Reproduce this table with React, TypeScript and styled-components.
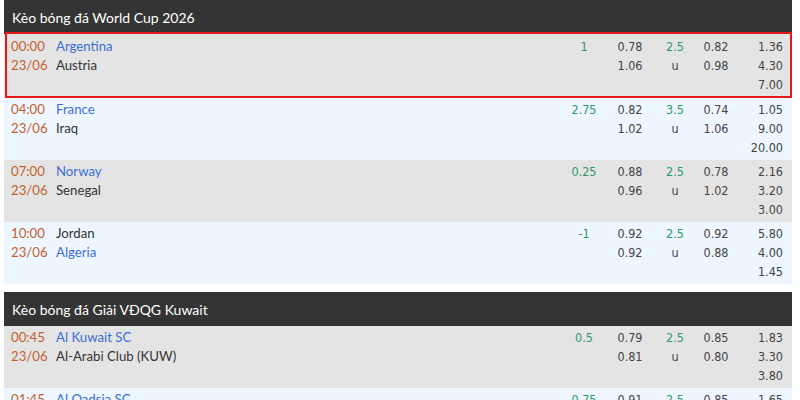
import React from "react";
import styled, { createGlobalStyle, css } from "styled-components";

const GlobalStyle = createGlobalStyle`
  html, body {
    margin: 0;
    padding: 0;
    background: #ffffff;
    overflow: hidden;
  }
  body {
    font-family: Lato, "Open Sans", sans-serif;
  }
`;

type Match = {
  time: string;
  date: string;
  home: string;
  away: string;
  fav: "home" | "away";
  hcp: string;
  o1: [string, string];
  ou: string;
  o2: [string, string];
  x12: [string, string, string];
  highlight?: boolean;
};

type Section = { title: string; matches: Match[] };

const sections: Section[] = [
  {
    title: "Kèo bóng đá World Cup 2026",
    matches: [
      { time: "00:00", date: "23/06", home: "Argentina", away: "Austria", fav: "home", hcp: "1", o1: ["0.78", "1.06"], ou: "2.5", o2: ["0.82", "0.98"], x12: ["1.36", "4.30", "7.00"], highlight: true },
      { time: "04:00", date: "23/06", home: "France", away: "Iraq", fav: "home", hcp: "2.75", o1: ["0.82", "1.02"], ou: "3.5", o2: ["0.74", "1.06"], x12: ["1.05", "9.00", "20.00"] },
      { time: "07:00", date: "23/06", home: "Norway", away: "Senegal", fav: "home", hcp: "0.25", o1: ["0.88", "0.96"], ou: "2.5", o2: ["0.78", "1.02"], x12: ["2.16", "3.20", "3.00"] },
      { time: "10:00", date: "23/06", home: "Jordan", away: "Algeria", fav: "away", hcp: "-1", o1: ["0.92", "0.92"], ou: "2.5", o2: ["0.92", "0.88"], x12: ["5.80", "4.00", "1.45"] },
    ],
  },
  {
    title: "Kèo bóng đá Giải VĐQG Kuwait",
    matches: [
      { time: "00:45", date: "23/06", home: "Al Kuwait SC", away: "Al-Arabi Club (KUW)", fav: "home", hcp: "0.5", o1: ["0.79", "0.81"], ou: "2.5", o2: ["0.85", "0.80"], x12: ["1.83", "3.30", "3.80"] },
      { time: "01:45", date: "23/06", home: "Al Qadsia SC", away: "Al-Salmiya SC", fav: "home", hcp: "0.75", o1: ["0.91", "0.89"], ou: "2.5", o2: ["0.85", "0.95"], x12: ["1.65", "3.60", "4.50"] },
    ],
  },
];

const Page = styled.div`
  margin: 0 8px 0 4px;
  display: flex;
  flex-direction: column;
  gap: 8px;
`;

const Block = styled.section`
  display: flex;
  flex-direction: column;
`;

const Header = styled.div`
  height: 34px;
  box-sizing: border-box;
  padding: 1px 0 0 8px;
  background: #343434;
  color: #ffffff;
  font-family: Lato, "Open Sans", sans-serif;
  font-size: 14px;
  line-height: 33px;
`;

const Row = styled.div<{ $alt: boolean; $highlight?: boolean }>`
  position: relative;
  display: grid;
  grid-template-columns: 45px 1fr 48px 44px 46px 36px 49px;
  padding: 2px 9px 3px 7px;
  background: ${(p) => (p.$alt ? "#eef6ff" : "#e4e4e4")};
  line-height: 19px;
  ${(p) =>
    p.$highlight &&
    css`
      padding-top: 3px;
      padding-bottom: 4px;
      &::after {
        content: "";
        position: absolute;
        top: -2px;
        left: 1px;
        right: 0;
        bottom: 0;
        border: 2px solid #e3191c;
        pointer-events: none;
      }
    `}
`;

const Stack = styled.div<{ $align?: "left" | "center" | "right" }>`
  display: flex;
  flex-direction: column;
  text-align: ${(p) => p.$align ?? "left"};
  white-space: nowrap;
`;

const TimeText = styled.span`
  font-family: Lato, "Open Sans", sans-serif;
  font-size: 13.2px;
  color: #c2622e;
`;

const Team = styled.span<{ $fav: boolean }>`
  font-family: Lato, "Open Sans", sans-serif;
  font-size: 13.2px;
  color: ${(p) => (p.$fav ? "#3b6fd6" : "#333333")};
`;

const Num = styled.span<{ $green?: boolean }>`
  font-family: "DejaVu Sans Condensed", "DejaVu Sans", Verdana, sans-serif;
  font-size: 12.5px;
  color: ${(p) => (p.$green ? "#2e9a6b" : "#444444")};
  min-height: 19px;
`;

function MatchRow({ m, alt }: { m: Match; alt: boolean }) {
  return (
    <Row $alt={alt} $highlight={m.highlight}>
      <Stack>
        <TimeText>{m.time}</TimeText>
        <TimeText>{m.date}</TimeText>
      </Stack>
      <Stack>
        <Team $fav={m.fav === "home"}>{m.home}</Team>
        <Team $fav={m.fav === "away"}>{m.away}</Team>
      </Stack>
      <Stack $align="center">
        <Num $green>{m.hcp}</Num>
      </Stack>
      <Stack $align="center">
        <Num>{m.o1[0]}</Num>
        <Num>{m.o1[1]}</Num>
      </Stack>
      <Stack $align="center">
        <Num $green>{m.ou}</Num>
        <Num>u</Num>
      </Stack>
      <Stack $align="center">
        <Num>{m.o2[0]}</Num>
        <Num>{m.o2[1]}</Num>
      </Stack>
      <Stack $align="right">
        <Num>{m.x12[0]}</Num>
        <Num>{m.x12[1]}</Num>
        <Num>{m.x12[2]}</Num>
      </Stack>
    </Row>
  );
}

export default function App() {
  return (
    <>
      <GlobalStyle />
      <Page>
        {sections.map((s) => (
          <Block key={s.title}>
            <Header>{s.title}</Header>
            {s.matches.map((m, i) => (
              <MatchRow key={m.time + m.home} m={m} alt={i % 2 === 1} />
            ))}
          </Block>
        ))}
      </Page>
    </>
  );
}
